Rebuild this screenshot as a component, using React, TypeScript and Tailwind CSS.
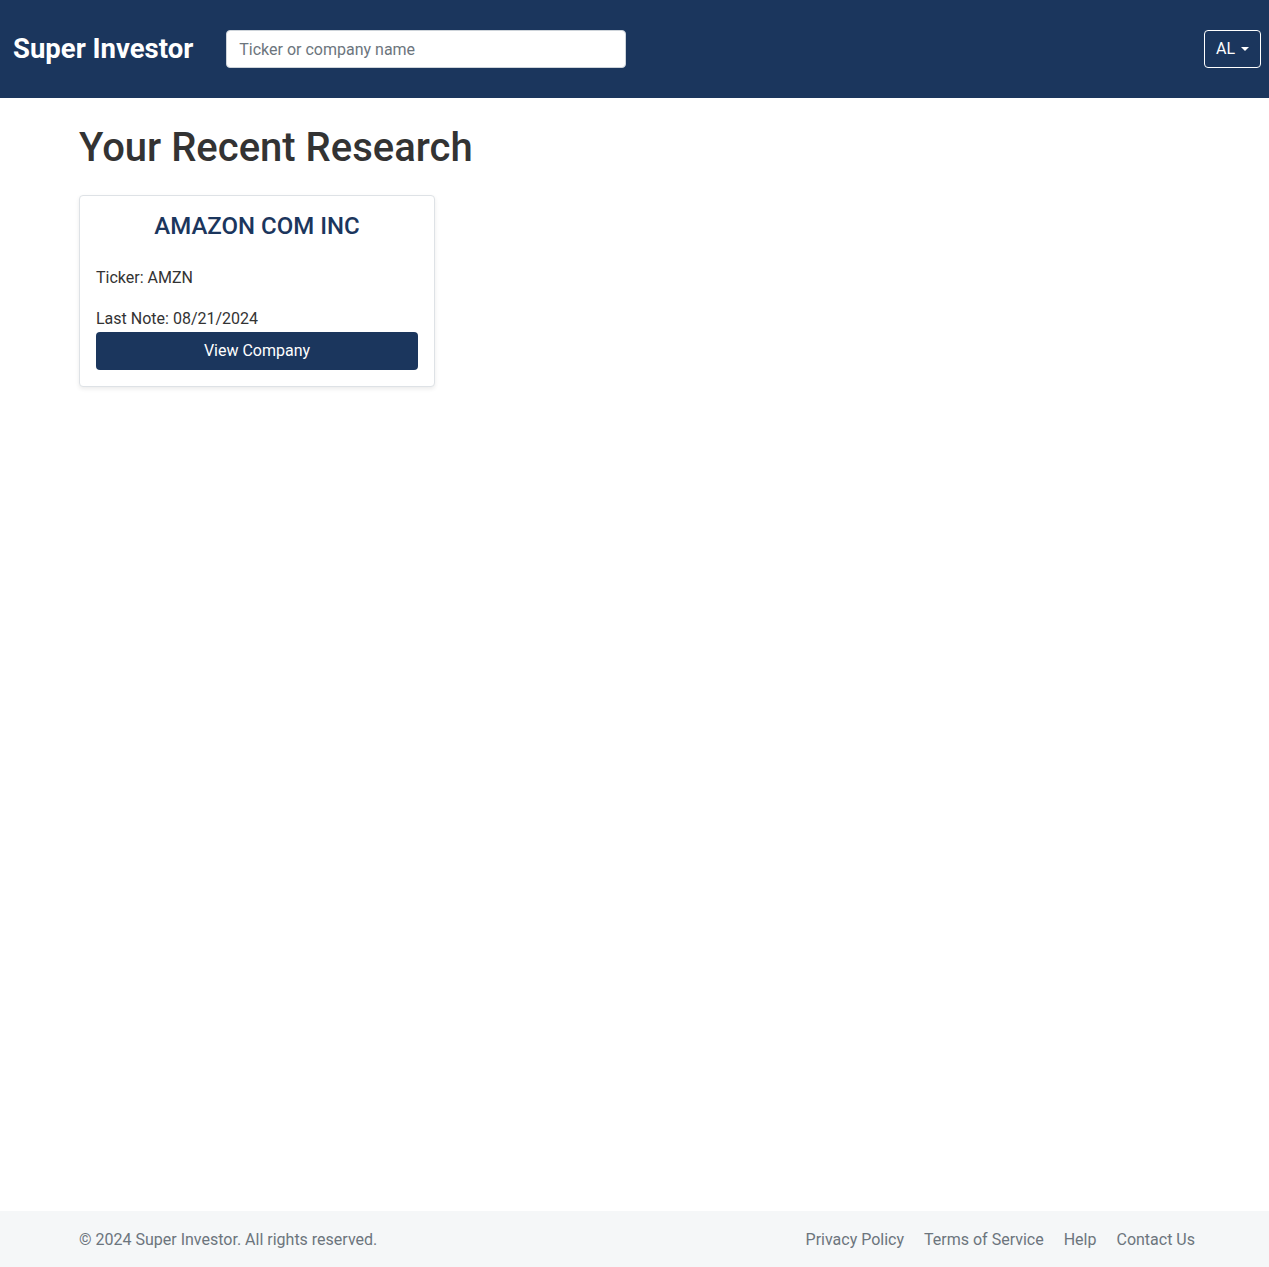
import { useState } from 'react';

interface RecentItem {
  name: string;
  ticker: string;
  lastNote: string;
}

const recent: RecentItem[] = [
  { name: 'AMAZON COM INC', ticker: 'AMZN', lastNote: '08/21/2024' },
];

function Header() {
  const [query, setQuery] = useState('');
  return (
    <header className="h-[98px] bg-[#1b365d] flex items-center pl-[13px] pr-2">
      <span className="text-[27.5px] font-bold text-white leading-none mr-[33px]">Super Investor</span>
      <input
        value={query}
        onChange={e => setQuery(e.target.value)}
        placeholder="Ticker or company name"
        className="w-[400px] h-[38px] rounded-[4px] bg-white border border-[#ced4da] px-3 text-base text-[#495057] placeholder:text-[#6c757d] outline-none"
      />
      <button className="ml-auto h-[38px] px-[11px] rounded-[4px] border border-white text-white text-base flex items-center gap-[6px]">
        AL
        <span className="w-0 h-0 border-x-[4px] border-x-transparent border-t-[4px] border-t-white" />
      </button>
    </header>
  );
}

function RecentCard({ item }: { item: RecentItem }) {
  return (
    <div className="w-[356px] bg-white border border-[#dee2e6] rounded-[4px] shadow-[0_2px_4px_rgba(0,0,0,0.08)] px-4 pt-[16px] pb-4">
      <h2 className="text-[24px] text-[#1b365d] font-medium text-center leading-[28px] mb-[26px]">{item.name}</h2>
      <p className="text-base text-[#333] leading-6 mb-[17px]">Ticker: {item.ticker}</p>
      <p className="text-base text-[#333] leading-6">Last Note: {item.lastNote}</p>
      <button className="w-full h-[38px] mt-[1px] rounded-[4px] bg-[#1b365d] text-white text-base">View Company</button>
    </div>
  );
}

export default function App() {
  return (
    <div className="min-h-[1267px] flex flex-col bg-white font-['Roboto',sans-serif]">
      <Header />
      <main className="flex-1 pl-[79px] pt-[26px]">
        <h1 className="text-[40px] font-medium text-[#333] leading-[48px] mb-[23px]">Your Recent Research</h1>
        <div className="flex gap-6">
          {recent.map(item => (
            <RecentCard key={item.ticker} item={item} />
          ))}
        </div>
      </main>
      {/* Footer */}
      <footer className="h-[56px] bg-[#f5f7f8] flex items-center justify-between pl-[79px] pr-[74px] pt-[2px] text-base text-[#6c757d]">
        <span>© 2024 Super Investor. All rights reserved.</span>
        <nav className="flex gap-5">
          <a href="#">Privacy Policy</a>
          <a href="#">Terms of Service</a>
          <a href="#">Help</a>
          <a href="#">Contact Us</a>
        </nav>
      </footer>
    </div>
  );
}
